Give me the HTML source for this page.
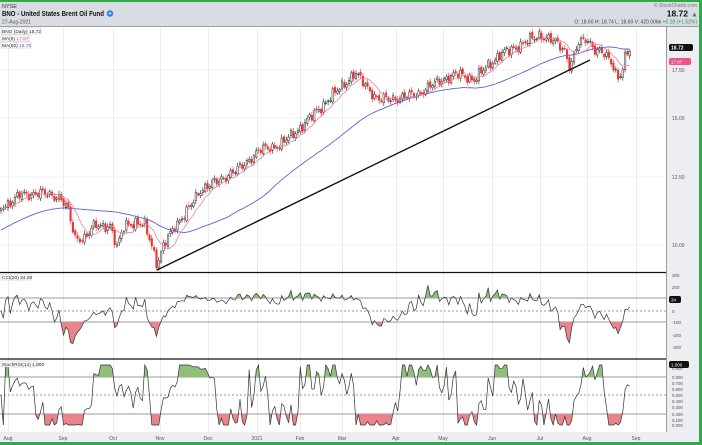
<!DOCTYPE html>
<html><head><meta charset="utf-8">
<style>
html,body{margin:0;padding:0;background:#fff;}
body{width:702px;height:445px;overflow:hidden;font-family:"Liberation Sans",sans-serif;}
svg{display:block}
text{font-family:"Liberation Sans",sans-serif;}
</style></head><body>
<svg id="s" width="702" height="445" viewBox="0 0 702 445" xmlns="http://www.w3.org/2000/svg">
<rect x="0" y="0" width="702" height="445" fill="#eceef2"/>
<rect x="0" y="0" width="702" height="2" fill="#2eaa4a"/>
<rect x="699" y="0" width="3" height="445" fill="#2eaa4a"/>
<rect x="0" y="442" width="702" height="3" fill="#2eaa4a"/>
<rect x="0" y="2" width="699" height="24" fill="#d9dce3"/>
<line x1="0" y1="26.5" x2="699" y2="26.5" stroke="#9aa0a8"/>
<text x="2" y="8" font-size="5.5" fill="#333">NYSE</text>
<text x="2" y="16" font-size="7.5" font-weight="bold" fill="#111" textLength="102" lengthAdjust="spacingAndGlyphs">BNO - United States Brent Oil Fund</text>
<circle cx="110" cy="13.5" r="3.2" fill="#2a7de1"/><text x="108.2" y="15.6" font-size="6" fill="#fff" font-weight="bold">+</text>
<text x="2" y="23.5" font-size="5" fill="#555">27-Aug-2021</text>
<text x="697" y="7" font-size="5" fill="#777" text-anchor="end">© StockCharts.com</text>
<text x="688" y="16.5" font-size="8.5" font-weight="bold" fill="#111" text-anchor="end">18.72</text>
<text x="691" y="16.5" font-size="7" fill="#2a9a3a">▲</text>
<text x="697" y="23.5" font-size="5" fill="#444" text-anchor="end">O: 18.60   H: 18.74   L: 18.60   V: 420.006k <tspan fill="#2a9a3a">+0.28 (+1.52%)</tspan></text>
<rect x="0" y="27" width="666" height="405" fill="#fff"/>
<g id="grid"></g>
<g id="main"></g>
<line x1="0" y1="272.5" x2="666" y2="272.5" stroke="#111" stroke-width="1.3"/>
<line x1="0" y1="359" x2="666" y2="359" stroke="#111" stroke-width="1.3"/>
<line x1="666.5" y1="27" x2="666.5" y2="432" stroke="#999"/>
<rect x="1" y="28" width="40" height="6" fill="#fff" stroke="#aab" stroke-width="0.4"/>
<text x="2" y="33" font-size="4.8" fill="#222">BNO (Daily) 18.72</text>
<rect x="1" y="35" width="28" height="6" fill="#fff" stroke="#aab" stroke-width="0.4"/>
<text x="2" y="40" font-size="4.8" fill="#222">MA(9) <tspan fill="#e0457a">17.87</tspan></text>
<rect x="1" y="42" width="30" height="6" fill="#fff" stroke="#aab" stroke-width="0.4"/>
<text x="2" y="47" font-size="4.8" fill="#222">MA(50) <tspan fill="#5a5ad8">18.75</tspan></text>
<rect x="1" y="274" width="30" height="6" fill="#fff" stroke="#aab" stroke-width="0.4"/>
<text x="2" y="279" font-size="4.8" fill="#222">CCI(20) 34.00</text>
<rect x="1" y="361" width="36" height="6" fill="#fff" stroke="#aab" stroke-width="0.4"/>
<text x="2" y="366" font-size="4.8" fill="#222">StochRSI(14) 1.000</text>
<g id="axis" font-size="5" fill="#555"></g>
</svg>
<script>
var NS="http://www.w3.org/2000/svg";
function el(p,t,a){var e=document.createElementNS(NS,t);for(var k in a)e.setAttribute(k,a[k]);p.appendChild(e);return e;}
var G=document.getElementById('grid'),M=document.getElementById('main'),A=document.getElementById('axis');
var months=[[8,'Aug'],[63,'Sep'],[113,'Oct'],[160,'Nov'],[208,'Dec'],[257,'2021'],[300,'Feb'],[342,'Mar'],[396,'Apr'],[443,'May'],[492,'Jun'],[540,'Jul'],[587,'Aug'],[636,'Sep']];
months.forEach(function(m){el(G,'line',{x1:m[0]+.5,y1:27,x2:m[0]+.5,y2:432,stroke:'#e6e8ec','stroke-width':0.8});
 var t=el(A,'text',{x:m[0],y:440,'text-anchor':'middle'});t.textContent=m[1];});
[[70,'17.50'],[118,'15.00'],[177,'12.50'],[245,'10.00']].forEach(function(r){el(G,'line',{x1:0,y1:r[0],x2:666,y2:r[0],stroke:'#eceef0','stroke-width':0.8});var t=el(A,'text',{x:672,y:r[0]+2});t.textContent=r[1];});
function hl(y,d,c,w){el(G,'line',{x1:0,y1:y,x2:666,y2:y,stroke:c||'#888','stroke-width':w||0.8,'stroke-dasharray':d||''});}
hl(298,'', '#777');hl(311,'2,2','#777');hl(322,'','#777');
hl(377,'','#777');hl(395,'2,2','#777');hl(414,'','#777');
[[275,'300'],[287,'200'],[311,'0'],[322,'-100'],[335,'-200'],[347,'-300']].forEach(function(r){var t=el(A,'text',{x:672,y:r[0]+2,'font-size':4.5});t.textContent=r[1];});
[[368,'0.900'],[377,'0.800'],[383,'0.700'],[389,'0.600'],[395,'0.500'],[401,'0.400'],[407,'0.300'],[414,'0.200'],[420,'0.100'],[425,'0.000']].forEach(function(r){var t=el(A,'text',{x:672,y:r[0]+2,'font-size':4.3});t.textContent=r[1];});
var K=[[0,207],[10,203],[20,195],[40,193],[60,197],[68,210],[75,238],[85,238],[95,225],[110,226],[117,248],[125,223],[145,225],[152,245],[157,265],[165,243],[175,225],[185,215],[200,190],[220,180],[240,168],[260,150],[280,145],[300,128],[320,108],[340,88],[355,73],[368,88],[378,100],[400,98],[420,93],[440,80],[460,74],[475,80],[485,68],[500,55],[520,45],[540,35],[555,42],[565,50],[570,68],[578,44],[587,38],[595,50],[605,55],[612,62],[618,78],[622,72],[626,55],[632,48]];
function interp(x){for(var i=1;i<K.length;i++){if(x<=K[i][0]){var a=K[i-1],b=K[i];return a[1]+(b[1]-a[1])*(x-a[0])/(b[0]-a[0]);}}return K[K.length-1][1];}
var N=272,xs=[],cl=[];
for(var i=0;i<N;i++){var x=1+i*2.32;xs.push(x);cl.push(interp(x)+3.5*Math.sin(i*1.7)+2*Math.sin(i*3.1+1)+1.5*Math.sin(i*0.6));}
var C=el(M,'g',{});
for(var i=0;i<N;i++){var o=i?cl[i-1]+1.5*Math.sin(i*2.3):cl[i]+2;var c=cl[i];var up=c<o;var col=up?'#222':'#e33';
 var hi=Math.min(o,c)-1.5-Math.abs(Math.sin(i*5.1))*2,lo=Math.max(o,c)+1.5+Math.abs(Math.cos(i*4.3))*2;
 el(C,'line',{x1:xs[i],y1:hi,x2:xs[i],y2:lo,stroke:col,'stroke-width':0.6});
 el(C,'rect',{x:xs[i]-0.8,y:Math.min(o,c),width:1.6,height:Math.max(0.8,Math.abs(c-o)),fill:up?'#fff':col,stroke:col,'stroke-width':0.5});}
function ma(a,n){return a.map(function(_,i){var s=0,k=0;for(var j=Math.max(0,i-n+1);j<=i;j++){s+=a[j];k++;}return s/k;});}
var m9=ma(cl,9),m50=ma(cl,50);
for(var i=0;i<50;i++)m50[i]=i<28?230-22*Math.sin(i/28*Math.PI/2):208+(m50[50]-208)*(i-28)/22;
function pl(a,col,w){el(M,'polyline',{points:a.map(function(v,i){return xs[i].toFixed(1)+','+v.toFixed(1)}).join(' '),fill:'none',stroke:col,'stroke-width':w});}
pl(m50,'#6060d8',0.9);pl(m9,'#ef7fa0',0.8);
el(M,'line',{x1:157,y1:270,x2:590,y2:60,stroke:'#111','stroke-width':1.4});
var p=cl.map(function(v){return -v}),cci=[];
for(var i=0;i<N;i++){var s=Math.max(0,i-19),w=p.slice(s,i+1),mm=w.reduce(function(a,b){return a+b})/w.length,md=w.reduce(function(a,b){return a+Math.abs(b-mm)},0)/w.length||1;cci.push(Math.max(-330,Math.min(300,(p[i]-mm)/(0.015*md)*0.95)));}
var cy=cci.map(function(v){return 311-v*0.113});
function osc(ys,top,bot,tl,bl){var pts=ys.map(function(v,i){return xs[i].toFixed(1)+','+v.toFixed(1)}).join(' ');
 var id='c'+top;var d=el(M,'defs',{});var cp=el(d,'clipPath',{id:id+'a'});el(cp,'rect',{x:0,y:top,width:666,height:tl-top});
 var cp2=el(d,'clipPath',{id:id+'b'});el(cp2,'rect',{x:0,y:bl,width:666,height:bot-bl});
 el(M,'polygon',{points:xs[0]+','+tl+' '+pts+' '+xs[N-1]+','+tl,fill:'#8fbf7a','clip-path':'url(#'+id+'a)'});
 el(M,'polygon',{points:xs[0]+','+bl+' '+pts+' '+xs[N-1]+','+bl,fill:'#e8848a','clip-path':'url(#'+id+'b)'});
 el(M,'polyline',{points:pts,fill:'none',stroke:'#333','stroke-width':0.7});}
osc(cy,273,359,298,322);
var rsi=[];for(var i=0;i<N;i++){var g=0,l=0;for(var j=Math.max(1,i-13);j<=i;j++){var d=p[j]-p[j-1]||0;if(d>0)g+=d;else l-=d;}rsi.push(g+l?g/(g+l):0.5);}
var st=[];for(var i=0;i<N;i++){var w=rsi.slice(Math.max(0,i-13),i+1),mn=Math.min.apply(0,w),mx=Math.max.apply(0,w);st.push(mx>mn?(rsi[i]-mn)/(mx-mn):0.5);}
var sy=st.map(function(v){return 425-v*60});
osc(sy,360,432,377,414);
el(A,'rect',{x:669,y:44,width:24,height:7,rx:2,fill:'#111'});var t=el(A,'text',{x:671,y:49.5,fill:'#fff','font-weight':'bold'});t.textContent='18.72';
el(A,'rect',{x:669,y:58,width:22,height:7,rx:2,fill:'#f0508a'});t=el(A,'text',{x:671,y:63.5,fill:'#fff','font-size':4.5});t.textContent='17.87';
el(A,'rect',{x:669,y:296,width:12,height:7,rx:2,fill:'#111'});t=el(A,'text',{x:671,y:301.5,fill:'#fff','font-size':4.5});t.textContent='34';
el(A,'rect',{x:669,y:361,width:20,height:7,rx:2,fill:'#111'});t=el(A,'text',{x:671,y:366.5,fill:'#fff','font-size':4.5});t.textContent='1.000';
</script>
</body></html>
